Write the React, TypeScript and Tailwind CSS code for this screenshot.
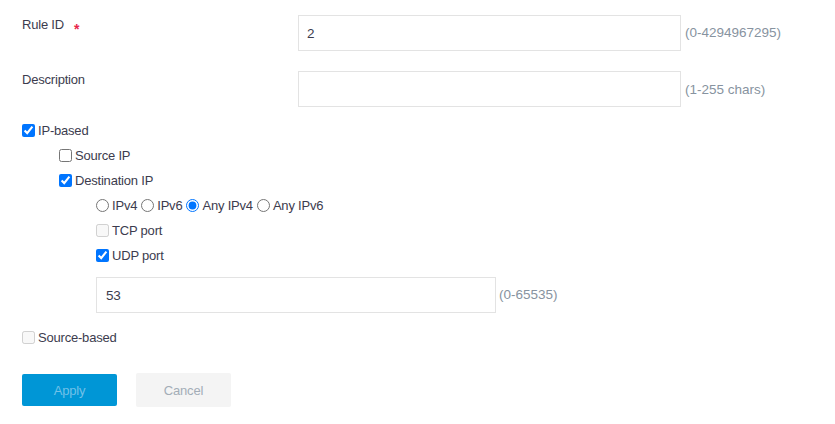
import React from 'react';

const font = "font-['Liberation_Sans',Arial,sans-serif]";

interface CheckProps {
  label: string;
  checked?: boolean;
  disabled?: boolean;
  indent?: number;
}

const CheckRow: React.FC<CheckProps> = ({ label, checked, disabled, indent = 0 }) => (
  <label
    className={
      'flex h-[25px] items-center gap-[3px] ' +
      (indent === 0 ? 'pl-[22px]' : indent === 1 ? 'pl-[59px]' : 'pl-[96px]')
    }
  >
    <input type="checkbox" defaultChecked={checked} disabled={disabled} className="m-0 h-[13px] w-[13px]" />
    <span>{label}</span>
  </label>
);

const Radio: React.FC<{ label: string; checked?: boolean }> = ({ label, checked }) => (
  <label className="flex items-center gap-[3px]">
    <input type="radio" name="iptype" defaultChecked={checked} className="m-0 h-[13px] w-[13px]" />
    <span>{label}</span>
  </label>
);

const hint = 'text-[13.5px] tracking-normal text-[#8793a0]';

export default function App() {
  return (
    <div className={`w-[835px] h-[424px] bg-white text-[13px] leading-none tracking-[-0.2px] text-[#3c3c4e] ${font}`}>
      {/* Rule ID */}
      <div className="flex items-start pt-[15px]">
        <div className="flex w-[298px] pl-[22px] pt-[3px]">
          <span>Rule ID</span>
          <span className="ml-[10px] mt-[4px] text-[14px] font-bold text-[#e8254a]">*</span>
        </div>
        <input
          defaultValue="2"
          className="h-[36px] w-[383px] border border-[#e3e3e3] px-[8px] text-[13.5px] outline-none"
        />
        <span className={`ml-[4px] self-center ${hint}`}>(0-4294967295)</span>
      </div>

      {/* Description */}
      <div className="mt-[20px] flex items-start">
        <div className="w-[298px] pl-[22px] pt-[2px]">Description</div>
        <input className="h-[36px] w-[383px] border border-[#e3e3e3] px-[8px] outline-none" />
        <span className={`ml-[4px] self-center pt-[2px] ${hint}`}>(1-255 chars)</span>
      </div>

      {/* IP options */}
      <div className="mt-[11px]">
        <CheckRow label="IP-based" checked />
        <CheckRow label="Source IP" indent={1} />
        <CheckRow label="Destination IP" checked indent={1} />
        <div className="flex h-[25px] items-center gap-[4px] pl-[96px]">
          <Radio label="IPv4" />
          <Radio label="IPv6" />
          <Radio label="Any IPv4" checked />
          <Radio label="Any IPv6" />
        </div>
        <CheckRow label="TCP port" disabled indent={2} />
        <CheckRow label="UDP port" checked indent={2} />
      </div>

      <div className="mt-[9px] flex items-center pl-[96px]">
        <input
          defaultValue="53"
          className="h-[36px] w-[400px] border border-[#e3e3e3] px-[9px] text-[13.5px] outline-none"
        />
        <span className={`ml-[3px] ${hint}`}>(0-65535)</span>
      </div>

      <div className="mt-[12px]">
        <CheckRow label="Source-based" disabled />
      </div>

      {/* Buttons */}
      <div className="mt-[23px] flex items-center gap-[19px] pl-[22px]">
        <button className="h-[32px] w-[95px] rounded-[2px] bg-[#0096d6] text-[#72c1e8]">Apply</button>
        <button className="h-[34px] w-[95px] rounded-[2px] bg-[#f4f4f4] text-[#a3adb7]">Cancel</button>
      </div>
    </div>
  );
}
